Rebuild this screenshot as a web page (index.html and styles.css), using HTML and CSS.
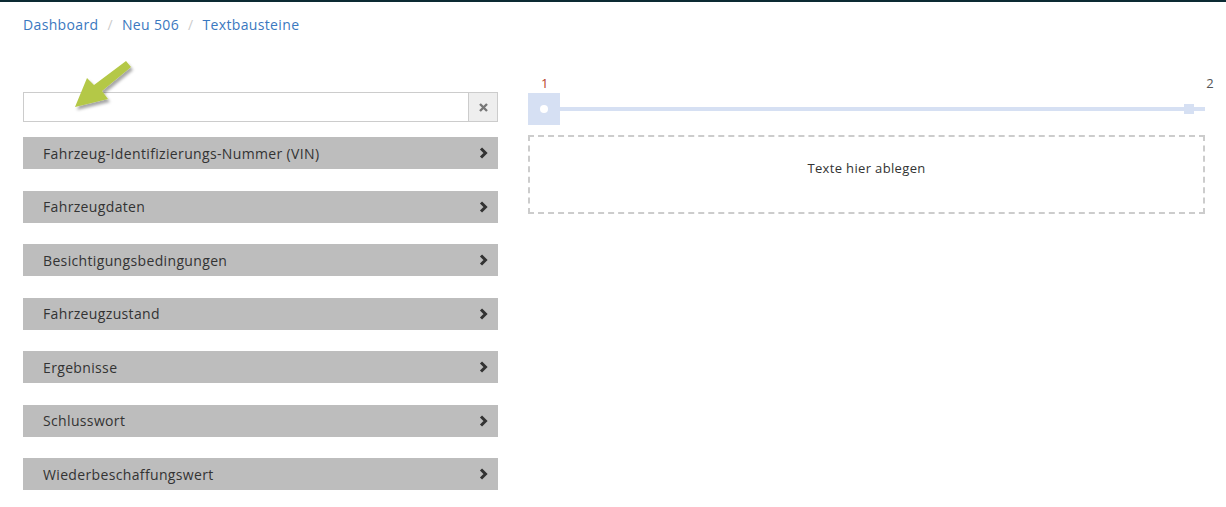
FILE: index.html
```html
<!DOCTYPE html>
<html lang="de">
<head>
    <meta charset="UTF-8">
    <meta name="viewport" content="width=device-width, initial-scale=1.0">
    <title>Textbausteine</title>
    <link rel="stylesheet" href="styles.css">
</head>
<body>
    <div class="topbar"></div>
    <div class="page">
        <!-- Breadcrumb -->
        <ol class="breadcrumb">
            <li><a href="#">Dashboard</a></li>
            <li><a href="#">Neu 506</a></li>
            <li><a href="#">Textbausteine</a></li>
        </ol>

        <div class="content">
            <!-- Left: search + categories -->
            <div class="sidebar">
                <div class="search">
                    <input type="text" class="search-input">
                    <button class="search-clear">
                        <svg width="9" height="9" viewBox="0 0 9 9"><path d="M1 1L8 8M8 1L1 8" stroke="#777" stroke-width="2.4"/></svg>
                    </button>
                    <svg class="hint-arrow" width="70" height="56" viewBox="0 0 70 56">
                        <defs>
                            <filter id="sh" x="-20%" y="-20%" width="150%" height="150%">
                                <feDropShadow dx="2" dy="3" stdDeviation="1.5" flood-color="#000" flood-opacity="0.35"/>
                            </filter>
                        </defs>
                        <path d="M57 2L62 8L33 32L39 40L6 48L18 19L25 26Z" fill="#b4c846" filter="url(#sh)"/>
                    </svg>
                </div>

                <ul class="categories">
                    <li class="category"><span>Fahrzeug-Identifizierungs-Nummer (VIN)</span><svg class="chevron" width="9" height="12" viewBox="0 0 9 12"><path d="M2 1.5L6.5 6L2 10.5" fill="none" stroke="#333" stroke-width="3"/></svg></li>
                    <li class="category"><span>Fahrzeugdaten</span><svg class="chevron" width="9" height="12" viewBox="0 0 9 12"><path d="M2 1.5L6.5 6L2 10.5" fill="none" stroke="#333" stroke-width="3"/></svg></li>
                    <li class="category"><span>Besichtigungsbedingungen</span><svg class="chevron" width="9" height="12" viewBox="0 0 9 12"><path d="M2 1.5L6.5 6L2 10.5" fill="none" stroke="#333" stroke-width="3"/></svg></li>
                    <li class="category"><span>Fahrzeugzustand</span><svg class="chevron" width="9" height="12" viewBox="0 0 9 12"><path d="M2 1.5L6.5 6L2 10.5" fill="none" stroke="#333" stroke-width="3"/></svg></li>
                    <li class="category"><span>Ergebnisse</span><svg class="chevron" width="9" height="12" viewBox="0 0 9 12"><path d="M2 1.5L6.5 6L2 10.5" fill="none" stroke="#333" stroke-width="3"/></svg></li>
                    <li class="category"><span>Schlusswort</span><svg class="chevron" width="9" height="12" viewBox="0 0 9 12"><path d="M2 1.5L6.5 6L2 10.5" fill="none" stroke="#333" stroke-width="3"/></svg></li>
                    <li class="category"><span>Wiederbeschaffungswert</span><svg class="chevron" width="9" height="12" viewBox="0 0 9 12"><path d="M2 1.5L6.5 6L2 10.5" fill="none" stroke="#333" stroke-width="3"/></svg></li>
                </ul>
            </div>

            <!-- Right: pages + drop zone -->
            <div class="editor">
                <div class="steps">
                    <span class="step-num active">1</span>
                    <span class="step-num">2</span>
                </div>
                <div class="track">
                    <div class="track-start"><span class="dot"></span></div>
                    <div class="track-line"></div>
                    <div class="track-end"></div>
                </div>
                <div class="dropzone">Texte hier ablegen</div>
            </div>
        </div>
    </div>
</body>
</html>
```

FILE: styles.css
```css
* {
    margin: 0;
    padding: 0;
    box-sizing: border-box;
}

body {
    font-family: "Open Sans", Arial, sans-serif;
    color: #333;
    background: #fff;
    letter-spacing: 0.35px;
}

.topbar {
    height: 2px;
    background-color: #0c2a33;
}

.page {
    padding: 0 21px 0 23px;
}

/* Breadcrumb */
.breadcrumb {
    list-style: none;
    display: flex;
    height: 44px;
    align-items: center;
    font-size: 14px;
}

.breadcrumb li + li::before {
    content: "/";
    color: #ccc;
    padding: 0 9px;
}

.breadcrumb a {
    color: #3a78c0;
    text-decoration: none;
}

.content {
    display: flex;
    gap: 30px;
    padding-top: 46px;
}

/* Sidebar */
.sidebar {
    width: 475px;
    flex-shrink: 0;
}

.search {
    position: relative;
    display: flex;
    height: 30px;
}

.search-input {
    flex: 1;
    border: 1px solid #ccc;
    border-right: none;
    outline: none;
    font-size: 14px;
    padding: 0 10px;
}

.search-clear {
    width: 30px;
    background-color: #eee;
    border: 1px solid #ccc;
    display: flex;
    justify-content: center;
    align-items: center;
}

.hint-arrow {
    position: absolute;
    left: 46px;
    top: -33px;
}

.categories {
    list-style: none;
    margin-top: 15px;
    display: flex;
    flex-direction: column;
    gap: 21.5px;
}

.category {
    height: 32px;
    background-color: #bdbdbd;
    display: flex;
    align-items: center;
    justify-content: space-between;
    padding: 0 10px 0 20px;
    font-size: 14px;
    color: #333;
}

/* Editor */
.editor {
    flex: 1;
    margin-top: -17px;
}

.steps {
    display: flex;
    justify-content: space-between;
    font-size: 13px;
    height: 16px;
    line-height: 16px;
    padding-left: 13px;
    margin-right: -9px;
}

.step-num {
    color: #555;
}

.step-num.active {
    color: #b8412a;
}

.track {
    display: flex;
    align-items: center;
    height: 32px;
    margin-top: 2px;
}

.track-start {
    width: 32px;
    height: 32px;
    background-color: #d6e0f3;
    display: flex;
    justify-content: center;
    align-items: center;
}

.dot {
    width: 8px;
    height: 8px;
    border-radius: 50%;
    background: #fff;
}

.track-line {
    flex: 1;
    height: 4px;
    background-color: #d6e0f3;
}

.track-end {
    width: 10px;
    height: 10px;
    background-color: #d6e0f3;
    margin-left: -21px;
    margin-right: 11px;
}

.dropzone {
    margin-top: 10px;
    height: 79px;
    border: 2px dashed #ccc;
    display: flex;
    justify-content: center;
    align-items: flex-start;
    padding-top: 22px;
    font-size: 13px;
    color: #333;
}
```
